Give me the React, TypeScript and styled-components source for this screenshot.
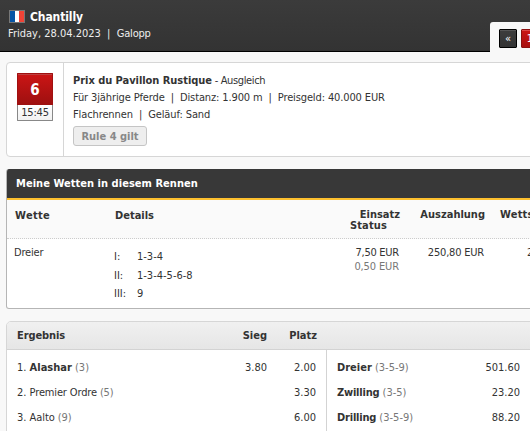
import React from "react";
import styled, { createGlobalStyle } from "styled-components";

const GlobalStyle = createGlobalStyle`
  * { box-sizing: border-box; }
  html, body { margin: 0; height: 431px; overflow: hidden; background: #f8f8f8; }
  body { font: 11px/18px "DejaVu Sans Condensed", "DejaVu Sans", sans-serif; font-stretch: condensed; color: #333; }
`;

const Page = styled.div`
  width: 530px;
  height: 431px;
  overflow: hidden;
`;

const T = styled.span<{ $ls?: number; $bold?: boolean; $muted?: boolean; $size?: number }>`
  white-space: pre;
  letter-spacing: ${(p) => p.$ls ?? 0}px;
  font-weight: ${(p) => (p.$bold ? 700 : 400)};
  font-size: ${(p) => p.$size ?? 11}px;
  ${(p) => p.$muted && "color: #777;"}
`;

const Header = styled.header`
  display: flex;
  justify-content: space-between;
  height: 52px;
  padding-left: 8px;
  background: linear-gradient(#3b3b3b, #333) no-repeat 0 0 / 100% 51px, #000;
  color: #fff;
`;

const Venue = styled.div`
  padding-top: 8px;
`;

const VenueName = styled.div`
  display: flex;
  align-items: center;
  gap: 5px;
  height: 17px;
  padding-left: 1px;
`;

const VenueMeta = styled.div`
  height: 17px;
  line-height: 17px;
  color: #eee;
`;

const Tabs = styled.nav`
  align-self: flex-end;
  display: flex;
  gap: 4px;
  width: 40px;
  height: 30px;
  padding: 7px 0 0 9px;
  overflow: hidden;
  background: #f8f8f8;
  border-top-left-radius: 3px;
`;

const TabButton = styled.span<{ $active?: boolean }>`
  flex: 0 0 18px;
  height: 19px;
  border: 1px solid ${(p) => (p.$active ? "#8c1010" : "#000")};
  border-radius: 1px;
  box-shadow: inset 0 1px ${(p) => (p.$active ? "#dc4848" : "#555")};
  background: ${(p) => (p.$active ? "linear-gradient(#cc1515, #a80f0f)" : "linear-gradient(#3d3d3d, #333)")};
  color: #fff;
  text-align: center;
  line-height: 18px;
`;

const Card = styled.section<{ $top: number; $height: number; $line?: string; $radius?: number }>`
  width: 540px;
  height: ${(p) => p.$height}px;
  margin: ${(p) => p.$top}px 0 0 6px;
  border: 1px solid ${(p) => p.$line ?? "#d6d6d6"};
  border-radius: ${(p) => p.$radius ?? 4}px;
  background: #fff;
  overflow: hidden;
`;

const RaceCard = styled(Card)`
  display: flex;
`;

const RaceAside = styled.div`
  width: 57px;
  padding: 10px 0 0 10px;
  border-right: 1px solid #d6d6d6;
`;

const RaceNumber = styled.div`
  width: 36px;
  height: 32px;
  border: 1px solid #a01010;
  border-bottom: 0;
  border-radius: 1px 1px 0 0;
  background: linear-gradient(#cb1515, #9d1010);
  box-shadow: inset 0 1px #bd4040;
  color: #fff;
  text-align: center;
  line-height: 32px;
`;

const RaceTime = styled.div`
  width: 36px;
  height: 16px;
  border: 1px solid #888;
  border-top: 0;
  border-radius: 0 0 1px 1px;
  background: linear-gradient(#fff, #f1f1f1);
  text-align: center;
  line-height: 16px;
`;

const RaceInfo = styled.div`
  padding: 9px 0 0 9px;
  line-height: 17px;
`;

const Tag = styled.div`
  width: 74px;
  height: 20px;
  margin-top: 3px;
  border: 1px solid #c5c5c5;
  border-radius: 3px;
  background: #eee;
  color: #888;
  text-align: center;
  line-height: 20px;
`;

const BetsCard = styled(Card)`
  border-top: 0;
`;

const BetsTitle = styled.h2`
  height: 31px;
  margin: 0 -1px;
  padding-left: 10px;
  border-bottom: 2px solid #fdc02f;
  background: #383838;
  color: #fff;
  line-height: 30px;
  font-size: 11px;
`;

const BetsRow = styled.div<{ $head?: boolean }>`
  display: grid;
  grid-template-columns: 100px 200px 86px 85px 60px;
  height: ${(p) => (p.$head ? 39 : 69)}px;
  padding: ${(p) => (p.$head ? "6px 0 0 8px" : "5px 0 0 7px")};
  ${(p) => p.$head && "background: #fafafa; border-bottom: 1px dotted #ccc;"}
`;

const Amounts = styled.div<{ $head?: boolean }>`
  display: flex;
  flex-direction: column;
  align-items: flex-end;
  margin-top: ${(p) => (p.$head ? 3 : 2)}px;
  padding-right: 1px;
  line-height: ${(p) => (p.$head ? 11 : 14)}px;
`;

const HeadCell = styled.div<{ $left?: number; $top?: number }>`
  padding: ${(p) => p.$top ?? 0}px 0 0 ${(p) => p.$left ?? 0}px;
`;

const Status = styled(T)`
  margin-right: 13px;
`;

const Legs = styled.div`
  display: grid;
  grid-template-columns: 23px 1fr;
  grid-auto-rows: 18.5px;
  align-content: start;
  padding-top: 4px;
`;

const ResultHead = styled.div`
  display: grid;
  grid-template-columns: 205px 45px 50px;
  height: 28px;
  padding-left: 10px;
  border-bottom: 1px solid #d3d3d3;
  background: linear-gradient(#f0f0f0, #e6e6e6);
  line-height: 28px;
`;

const Right = styled.div`
  text-align: right;
`;

const ResultBody = styled.div`
  display: flex;
  padding-right: 25px;
`;

const Runners = styled.div`
  width: 320px;
  height: 120px;
  padding: 5px 10px 0;
  border-right: 1px solid #d3d3d3;
`;

const Runner = styled.div`
  display: grid;
  grid-template-columns: 200px 50px 49px;
  height: 25px;
  line-height: 25px;
`;

const Odds = styled.div`
  width: 193px;
  padding: 5px 0 0 10px;
`;

const OddsRow = styled.div`
  display: flex;
  justify-content: space-between;
  height: 25px;
  line-height: 25px;
`;

const FlagFrance = () => (
  <svg width="16" height="13" viewBox="0 0 16 13">
    <rect width="16" height="13" fill="#777" />
    <rect x="1" y="1" width="5" height="11" fill="#0755a5" />
    <rect x="6" y="1" width="4" height="11" fill="#fff" />
    <rect x="10" y="1" width="5" height="11" fill="#f04336" />
  </svg>
);

const runners = [
  { place: 1, name: "Alashar", no: 3, win: "3.80", show: "2.00", ls: 0 },
  { place: 2, name: "Premier Ordre", no: 5, win: "", show: "3.30", ls: -0.15 },
  { place: 3, name: "Aalto", no: 9, win: "", show: "6.00", ls: -0.1 },
];

const odds = [
  { bet: "Dreier", combo: "3-5-9", pay: "501.60", ls: 0 },
  { bet: "Zwilling", combo: "3-5", pay: "23.20", ls: -0.2 },
  { bet: "Drilling", combo: "3-5-9", pay: "88.20", ls: -0.2 },
];

const legs = [
  ["I:", "1-3-4"],
  ["II:", "1-3-4-5-6-8"],
  ["III:", "9"],
];

export default function App() {
  return (
    <Page>
      <GlobalStyle />
      <Header>
        <Venue>
          <VenueName>
            <FlagFrance />
            <T $bold $size={12} $ls={-0.1}>Chantilly</T>
          </VenueName>
          <VenueMeta><T>Friday, 28.04.2023  |  </T><T $ls={-0.2}>Galopp</T></VenueMeta>
        </Venue>
        <Tabs>
          <TabButton>«</TabButton>
          <TabButton $active>1</TabButton>
        </Tabs>
      </Header>

      <RaceCard $top={10} $height={95}>
        <RaceAside>
          <RaceNumber><T $bold $size={15}>6</T></RaceNumber>
          <RaceTime><T $ls={-0.2}>15:45</T></RaceTime>
        </RaceAside>
        <RaceInfo>
          <div><T $bold $ls={-0.04}>Prix du Pavillon Rustique</T><T $ls={-0.38}> - Ausgleich</T></div>
          <div><T $ls={-0.125}>Für 3jährige Pferde  |  Distanz: 1.900 m  |  Preisgeld: 40.000 EUR</T></div>
          <div><T $ls={-0.11}>Flachrennen  |  Geläuf: Sand</T></div>
          <Tag><T $bold>Rule 4 gilt</T></Tag>
        </RaceInfo>
      </RaceCard>

      <BetsCard $top={12} $height={140} $line="#b5b5b5" $radius={3}>
        <BetsTitle><T $bold $ls={0.04}>Meine Wetten in diesem Rennen</T></BetsTitle>
        <BetsRow $head>
          <HeadCell $top={1}><T $bold $ls={0.35}>Wette</T></HeadCell>
          <HeadCell $top={1}><T $bold>Details</T></HeadCell>
          <Amounts $head>
            <T $bold>Einsatz</T>
            <Status $bold $ls={0.15}>Status</Status>
          </Amounts>
          <Amounts $head><T $bold>Auszahlung</T></Amounts>
          <HeadCell $left={14}><T $bold $ls={0.2}>Wettschein</T></HeadCell>
        </BetsRow>
        <BetsRow>
          <T $ls={-0.2}>Dreier</T>
          <Legs>
            {legs.map(([leg, picks]) => (
              <React.Fragment key={leg}>
                <T>{leg}</T>
                <T>{picks}</T>
              </React.Fragment>
            ))}
          </Legs>
          <Amounts>
            <T $ls={-0.25}>7,50 EUR</T>
            <T $muted $ls={-0.12}>0,50 EUR</T>
          </Amounts>
          <Amounts><T $ls={-0.2}>250,80 EUR</T></Amounts>
          <HeadCell $left={42}><T>28.04.</T></HeadCell>
        </BetsRow>
      </BetsCard>

      <Card $top={12} $height={130} $radius={5}>
        <ResultHead>
          <T $bold $ls={-0.1}>Ergebnis</T>
          <Right><T $bold>Sieg</T></Right>
          <Right><T $bold>Platz</T></Right>
        </ResultHead>
        <ResultBody>
          <Runners>
            {runners.map((r) => (
              <Runner key={r.place}>
                <div>
                  <T>{r.place}. </T>
                  <T $bold={r.place === 1} $ls={r.ls}>{r.name}</T>
                  <T $muted $ls={r.ls}> ({r.no})</T>
                </div>
                <Right><T>{r.win}</T></Right>
                <Right><T>{r.show}</T></Right>
              </Runner>
            ))}
          </Runners>
          <Odds>
            {odds.map((o) => (
              <OddsRow key={o.bet}>
                <div><T $bold $ls={o.ls}>{o.bet}</T><T $muted> ({o.combo})</T></div>
                <T>{o.pay}</T>
              </OddsRow>
            ))}
          </Odds>
        </ResultBody>
      </Card>
    </Page>
  );
}
